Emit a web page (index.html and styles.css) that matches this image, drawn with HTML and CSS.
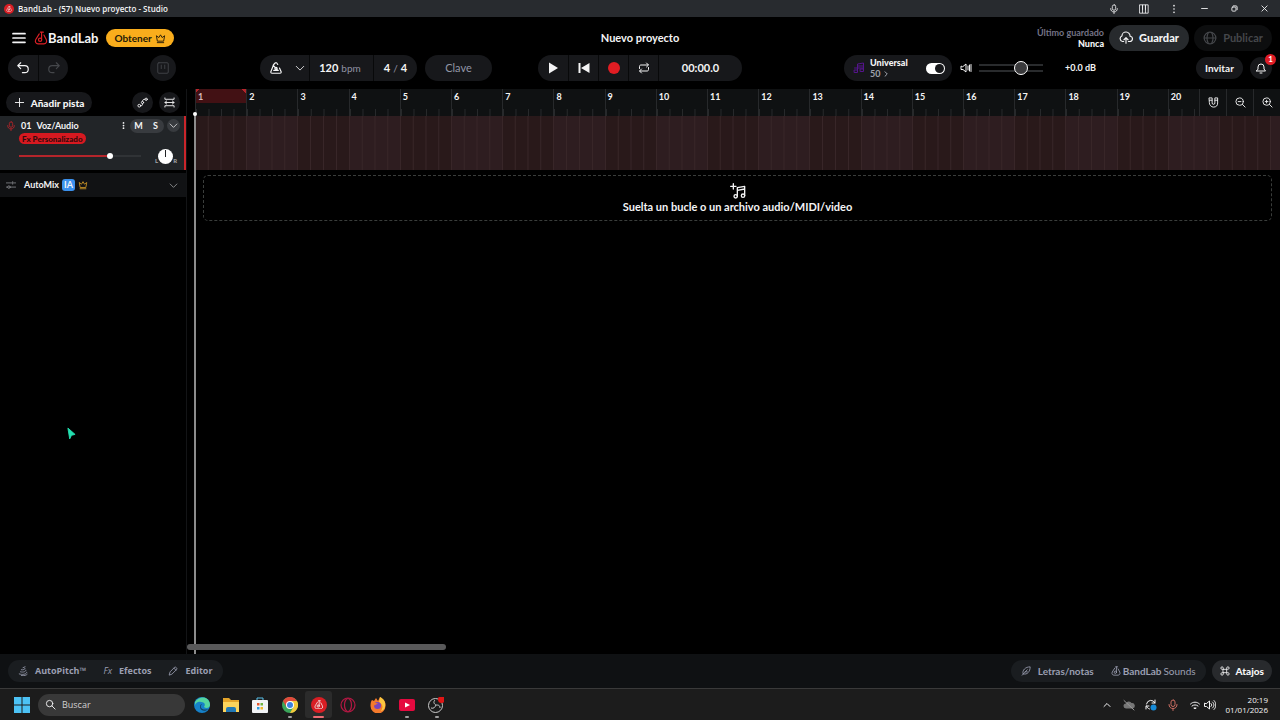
FILE: index.html
```html
<!DOCTYPE html>
<html lang="es">

<head>
  <meta charset="UTF-8">
  <meta name="viewport" content="width=device-width, initial-scale=1.0">
  <title>BandLab - (57) Nuevo proyecto - Studio</title>
  <link rel="stylesheet" href="styles.css">
</head>

<body>
  <svg class="sprite" aria-hidden="true">
    <symbol id="logo" viewBox="0 0 24 24">
      <path d="M11 2h5M13 2v12M9 5L3 14.500c-2 4 .5 7.500 4 7.500h10c3.500 0 6-3.500 4-7.500L17 7" />
      <circle cx="10.500" cy="15" r="2.800" />
    </symbol>
    <symbol id="crown" viewBox="0 0 24 24">
      <path d="M5 17L3 6l5.500 4L12 4l3.500 6L21 6l-2 11zM5 21h14" />
    </symbol>
    <symbol id="chevron" viewBox="0 0 24 24">
      <path d="M3 8l9 9 9-9" />
    </symbol>
    <symbol id="mic" viewBox="0 0 24 24">
      <rect x="8" y="2" width="8" height="13" rx="4" />
      <path d="M4 11c0 5 3 8 8 8s8-3 8-8M12 19v4" />
    </symbol>
  </svg>

  <header class="titlebar">
    <span class="app-icon"><svg class="icon"><use href="#logo" /></svg></span>
    <span class="window-title">BandLab - (57) Nuevo proyecto - Studio</span>
    <div class="window-buttons">
      <button aria-label="Micrófono"><svg class="icon"><use href="#mic" /></svg></button>
      <button aria-label="MIDI"><svg class="icon" viewBox="0 0 24 24"><path d="M2 2h20v20H2zM8.500 3v18M15.500 3v18M8.500 3v10M15.500 3v10" /></svg></button>
      <button aria-label="Más"><svg class="icon dots" viewBox="0 0 24 24"><circle cx="12" cy="4" r="2" /><circle cx="12" cy="12" r="2" /><circle cx="12" cy="20" r="2" /></svg></button>
      <button aria-label="Minimizar"><svg class="icon small" viewBox="0 0 24 24"><path d="M2 12h20" /></svg></button>
      <button aria-label="Restaurar"><svg class="icon small" viewBox="0 0 24 24"><rect x="3" y="7" width="14" height="14" rx="3" /><path d="M8 3h9a4 4 0 0 1 4 4v9" /></svg></button>
      <button aria-label="Cerrar"><svg class="icon small" viewBox="0 0 24 24"><path d="M3 3l18 18M21 3L3 21" /></svg></button>
    </div>
  </header>

  <div class="topbar">
    <div class="brand">
      <button class="menu" aria-label="Menú"><svg class="icon" viewBox="0 0 16 14"><path d="M1 2h14M1 7h14M1 12h14" /></svg></button>
      <a class="logo" href="#"><svg class="icon"><use href="#logo" /></svg>BandLab</a>
      <button class="get">Obtener <svg class="icon"><use href="#crown" /></svg></button>
    </div>
    <h1 class="project">Nuevo proyecto</h1>
    <div class="save">
      <p class="saved">Último guardado<strong>Nunca</strong></p>
      <button class="pill save-button"><svg class="icon" viewBox="0 0 24 24"><path d="M8 18H6a5 5 0 0 1-1-9.500A7 7 0 0 1 19 9a4.500 4.500 0 0 1-1 9h-2M12 21v-9M8.500 15L12 11.500l3.500 3.500" /></svg>Guardar</button>
      <button class="pill publish" disabled><svg class="icon" viewBox="0 0 24 24"><circle cx="12" cy="12" r="10" /><path d="M9 3c-3 6-3 12 0 18M15 3c3 6 3 12 0 18M2 12h20" /></svg>Publicar</button>
    </div>
  </div>

  <div class="toolbar">
    <div class="toolbar-start">
      <div class="group">
        <button aria-label="Deshacer"><svg class="icon" viewBox="0 0 24 24"><path d="M8 3L3 8l5 5M3 8h12a5.500 5.500 0 0 1 0 12h-4" /></svg></button>
        <button aria-label="Rehacer" disabled><svg class="icon" viewBox="0 0 24 24"><path d="M16 3l5 5-5 5M21 8H9a5.500 5.500 0 0 0 0 12h3" /></svg></button>
      </div>
      <button class="round midi" aria-label="Teclado MIDI" disabled><svg class="icon" viewBox="0 0 24 24"><rect x="3" y="3" width="18" height="18" rx="2" /><path d="M9 7v6M15 7v6" /></svg></button>
      <div class="group tempo">
        <button class="metronome" aria-label="Metrónomo"><svg class="icon" viewBox="0 0 24 24"><path d="M15 6l-2-3h-2L8 6 3 19c0 1 1 2 2 2h14c1 0 2-1 2-2l-3-7M8 16h8M15 16L7 7" /><circle cx="12" cy="13" r="2" /></svg><svg class="icon arrow"><use href="#chevron" /></svg></button>
        <button class="bpm">120 <small>bpm</small></button>
        <button class="signature">4 <small>/</small> 4</button>
      </div>
      <button class="pill key">Clave</button>
    </div>

    <div class="group transport">
      <button aria-label="Reproducir"><svg class="icon solid" viewBox="0 0 24 24"><path d="M4 1l18 11L4 23z" /></svg></button>
      <button aria-label="Inicio"><svg class="icon solid" viewBox="0 0 24 24"><path d="M1 2h4v20H1zM23 2v20L6 12z" /></svg></button>
      <button aria-label="Grabar"><span class="record"></span></button>
      <button aria-label="Repetir"><svg class="icon" viewBox="0 0 24 24"><path d="M3 13V9c0-2 1-3 3-3h14M17 2l4 4-4 4M21 11v4c0 2-1 3-3 3H4M7 14l-4 4 4 4" /></svg></button>
      <button class="time">00:00.0</button>
    </div>

    <div class="output">
      <div class="mastering">
        <svg class="icon" viewBox="0 0 24 24"><path d="M9 19V4l12-2v15M3 12h18M9 8h12" /><rect x="3" y="16" width="6" height="5" /><rect x="15" y="14" width="6" height="5" /></svg>
        <p><strong>Universal</strong><span>50 <svg class="icon"><use href="#chevron" /></svg></span></p>
        <input class="switch" type="checkbox" aria-label="Masterización" checked>
      </div>
      <svg class="icon speaker" viewBox="0 0 24 24"><path d="M2 9v6h4l6 5V4L6 9zM16 8v8M19 6v12M22 5v14" /></svg>
      <input class="volume" type="range" min="0" max="100" value="70" aria-label="Volumen general">
      <span class="db">+0.0 dB</span>
      <button class="pill invite">Invitar</button>
      <button class="round bell" aria-label="Notificaciones"><svg class="icon" viewBox="0 0 24 24"><path d="M3 18h18l-3-4V10a6 6 0 0 0-12 0v4zM10 22h4" /></svg><span class="badge">1</span></button>
    </div>
  </div>

  <main class="studio">
    <aside class="tracks">
      <div class="tracks-head">
        <button class="pill add"><svg class="icon" viewBox="0 0 24 24"><path d="M12 3v18M3 12h18" /></svg>Añadir pista</button>
        <button class="round" aria-label="Automatización"><svg class="icon" viewBox="0 0 24 24"><circle cx="5" cy="19" r="3" /><circle cx="12" cy="12" r="2.500" /><circle cx="20" cy="5" r="2.500" /><path d="M8 19c4 0 4-1 4-4M12 9c0-3 2-4 5-4" /></svg></button>
        <button class="round" aria-label="Ajustar pistas"><svg class="icon" viewBox="0 0 24 24"><path d="M2 2v3h20V2M2 22v-3h20v3M2 12h20M6 8.500L2 12l4 3.500M18 8.500l4 3.500-4 3.500" /></svg></button>
      </div>
      <section class="track">
        <div class="track-title">
          <svg class="icon rec"><use href="#mic" /></svg>
          <span class="number">01</span>
          <span class="name">Voz/Audio</span>
          <button class="more" aria-label="Opciones"><svg class="icon dots" viewBox="0 0 24 24"><circle cx="12" cy="3" r="3" /><circle cx="12" cy="12" r="3" /><circle cx="12" cy="21" r="3" /></svg></button>
          <div class="mute-solo"><button>M</button><button>S</button></div>
          <button class="expand" aria-label="Expandir"><svg class="icon"><use href="#chevron" /></svg></button>
        </div>
        <button class="fx">Fx Personalizado</button>
        <div class="mix">
          <input class="level" type="range" min="0" max="100" value="76" aria-label="Volumen de pista">
          <div class="pan"><span>L</span><span class="knob"></span><span>R</span></div>
        </div>
      </section>
      <section class="automix">
        <svg class="icon" viewBox="0 0 24 24"><path d="M1 7h13M18 7h5M16 4v6M1 17h3M10 17h13" /><circle cx="7" cy="17" r="3" /></svg>
        <span class="automix-name">AutoMix</span>
        <span class="ai">IA</span>
        <svg class="icon gold"><use href="#crown" /></svg>
        <button class="expand" aria-label="Expandir"><svg class="icon"><use href="#chevron" /></svg></button>
      </section>
    </aside>

    <section class="timeline">
      <div class="ruler">
        <div class="bars" id="bars"></div>
        <div class="ruler-tools">
          <button aria-label="Imán"><svg class="icon" viewBox="0 0 24 24"><path d="M3 2h6v11a3 3 0 0 0 6 0V2h6v11a9 9 0 0 1-18 0zM3 7h6M15 7h6" /></svg></button>
          <button aria-label="Alejar"><svg class="icon" viewBox="0 0 24 24"><circle cx="10" cy="10" r="8" /><path d="M16 16l6 6M7 10h6" /></svg></button>
          <button aria-label="Acercar"><svg class="icon" viewBox="0 0 24 24"><circle cx="10" cy="10" r="8" /><path d="M16 16l6 6M7 10h6M10 7v6" /></svg></button>
        </div>
      </div>
      <div class="lane" id="lane"></div>
      <div class="drop">
        <svg class="icon" viewBox="0 0 24 24"><path d="M5 1v8M1 5h8M11 20V7l11-2v14M11 11l11-2" /><circle cx="8.500" cy="20" r="2.500" /><circle cx="19.500" cy="19" r="2.500" /></svg>
        <span>Suelta un bucle o un archivo audio/MIDI/video</span>
      </div>
      <div class="playhead"></div>
      <div class="scroll"><span></span></div>
    </section>
  </main>

  <!-- Cursor del ratón -->
  <svg class="cursor" viewBox="0 0 10 14"><path d="M1 1l8 7-4 1-2 4z" /></svg>

  <footer class="panels">
    <div class="panel-group system">
      <button><svg class="icon" viewBox="0 0 24 24"><path d="M12 4l5-2M8 9c5 1 9-1 9-3M6 14c7 2 14-1 13-4M3 19c9 3 19 0 18-4M8 23c7 1 12-1 14-3" /></svg>AutoPitch™</button>
      <button><i>Fx</i>Efectos</button>
      <button><svg class="icon" viewBox="0 0 24 24"><path d="M3 21l2-7L16 3c2-2 7 3 5 5L10 19zM14 5l5 5" /></svg>Editor</button>
    </div>
    <div class="panel-group end">
      <button><svg class="icon" viewBox="0 0 24 24"><path d="M3 22L15 9M5 19C2 10 11 2 22 2c0 11-7 20-16 17M10 14h5" /></svg>Letras/notas</button>
      <button class="sounds"><svg class="icon"><use href="#logo" /></svg>BandLab <span>Sounds</span></button>
    </div>
    <button class="pill shortcuts"><svg class="icon" viewBox="0 0 24 24"><path d="M8 8h8v8H8zM8 8H5a3 3 0 1 1 3-3zM16 8V5a3 3 0 1 1 3 3zM16 16h3a3 3 0 1 1-3 3zM8 16v3a3 3 0 1 1-3-3z" /></svg>Atajos</button>
  </footer>

  <nav class="taskbar">
    <button class="app" aria-label="Inicio"><svg viewBox="0 0 16 16"><path fill="#4cc2f5" d="M0 0h7.500v7.500H0zM8.500 0H16v7.500H8.500zM0 8.500h7.500V16H0zM8.500 8.500H16V16H8.500z" /></svg></button>
    <label class="search"><svg class="icon" viewBox="0 0 24 24"><circle cx="10" cy="10" r="7" /><path d="M15 15l7 7" /></svg><input type="text" placeholder="Buscar" aria-label="Buscar"></label>
    <div class="apps">
      <button class="app" aria-label="Edge"><svg viewBox="0 0 16 16"><circle cx="8" cy="8" r="8" fill="#1681c9" /><path fill="#54d5a0" d="M1 5C5-2 16-1 16 8c0 3-4 4-6 2 2-3 0-5-3-5-3-1-5 1-6 3z" /><path fill="#14405f" d="M8 7c-3 3 0 7 6 5-2 3-8 2-8-2 0-2 1-3 2-3z" /></svg></button>
      <button class="app" aria-label="Explorador"><svg viewBox="0 0 16 16"><path fill="#e5a52a" d="M0 1h6l2 2h8v4H0z" /><path fill="#fcd45c" d="M0 5h16v10H0z" /><path fill="#2379b5" d="M3 15v-3q0-2 2-2h6q2 0 2 2v3z" /></svg></button>
      <button class="app" aria-label="Tienda"><svg viewBox="0 0 16 16"><path fill="none" stroke="#58bfe8" d="M5 4V1h6v3" /><rect y="3" width="16" height="13" rx="1" fill="#f1f3f5" /><path fill="#e4572e" d="M5 6h2.500v2.500H5z" /><path fill="#6fb43f" d="M8.500 6H11v2.500H8.500z" /><path fill="#2d9de0" d="M5 10h2.500v2.500H5z" /><path fill="#f2b82c" d="M8.500 10H11v2.500H8.500z" /></svg></button>
      <button class="app running" aria-label="Chrome"><svg viewBox="0 0 16 16"><circle cx="8" cy="8" r="8" fill="#3ba55a" /><path fill="#e04a3b" d="M1 4a8 8 0 0 1 14 0H8L4.500 10z" /><path fill="#f5c83b" d="M15 4a8 8 0 0 1-7 12l3.500-6L8 4z" /><circle cx="8" cy="8" r="4" fill="#fff" /><circle cx="8" cy="8" r="3" fill="#3d80e0" /></svg></button>
      <button class="app running current" aria-label="BandLab"><span class="app-icon"><svg class="icon"><use href="#logo" /></svg></span></button>
      <button class="app" aria-label="Opera"><svg viewBox="0 0 16 16" fill="none" stroke="#b31843" stroke-width="1.200"><circle cx="8" cy="8" r="7" /><ellipse cx="8" cy="8" rx="3.500" ry="6.500" /></svg></button>
      <button class="app" aria-label="Firefox"><svg viewBox="0 0 16 16"><path fill="#f47a2c" d="M2 3l2 1 2-3 2 3 2-4c3 2 6 4 5.500 9A7.500 7.500 0 0 1 .5 9C.5 6 1 4 2 3z" /><path fill="#fbc740" d="M10 0c4 2 6 5 5 10-1 3-3 4-4 4 3-5 1-7-2-9z" /><circle cx="7.500" cy="8.500" r="3.500" fill="#7746bd" /><path fill="#f47a2c" d="M3 6c2-1 3 1 5 0-1 2-3 1-3 3z" /></svg></button>
      <button class="app running" aria-label="YouTube"><svg viewBox="0 0 16 16"><rect y="2" width="16" height="12" rx="2" fill="#e5093f" /><path fill="#fff" d="M6 5.500l5 2.500-5 2.500z" /></svg></button>
      <button class="app running" aria-label="OBS"><svg viewBox="0 0 16 16" fill="none" stroke="#c9c9c9"><circle cx="7.500" cy="8.500" r="7" /><path d="M7 3c-2 2-1 4 1 5M3 11c3 1 4-1 5-3M12 11c0-3-2-3-4-3" /><circle cx="13.500" cy="2.500" r="3.500" fill="#e01515" stroke="none" /></svg></button>
    </div>
    <div class="tray">
      <svg class="icon" viewBox="0 0 24 24"><path d="M6 15l6-6 6 6" /></svg>
      <svg class="icon cloud" viewBox="0 0 24 24"><path class="fill" d="M6 19a5 5 0 0 1 0-10 6 6 0 0 1 11-1 5.500 5.500 0 0 1 2 11z" /><path d="M2 3l20 19" /></svg>
      <svg class="icon sync" viewBox="0 0 24 24"><path d="M3 10a9 9 0 0 1 17-2M20 2v6h-6M9 20c-3-1-5-3-6-6M2 20v-6h6" /><circle cx="17" cy="17" r="6" /></svg>
      <svg class="icon tray-mic"><use href="#mic" /></svg>
      <svg class="icon wifi" viewBox="0 0 24 24"><path d="M3 10c5-5 13-5 18 0M6 14c4-3 8-3 12 0M10 18h4M11 19h2" /></svg>
      <svg class="icon" viewBox="0 0 24 24"><path d="M1 9v6h4l6 5V4L5 9zM14 9c2 2 2 4 0 6M17 6c4 4 4 8 0 12M20 3c5 5 5 13 0 18" /></svg>
      <p class="clock">20:19<br>01/01/2026</p>
    </div>
  </nav>

  <script>
    const bars = document.getElementById("bars");
    const lane = document.getElementById("lane");

    for (let i = 1; i <= 25; i++) {
      const bar = document.createElement("span");
      bar.className = i === 1 ? "bar loop" : "bar";
      bar.textContent = i <= 20 ? i : "";
      bars.appendChild(bar);
      lane.appendChild(document.createElement("span"));
    }
  </script>
</body>

</html>
```
FILE: styles.css
```css
* {
  margin: 0;
  padding: 0;
  box-sizing: border-box;
}

body {
  display: flex;
  flex-direction: column;
  height: 100vh;
  overflow: hidden;
  background: #000;
  color: #f4f4f5;
  font-family: Lato, "Liberation Sans", sans-serif;
  font-size: 11px;
  font-weight: 700;
  line-height: 12px;
}

button,
input {
  border: 0;
  background: none;
  color: inherit;
  font: inherit;
}

button {
  display: flex;
  align-items: center;
  justify-content: center;
  flex-shrink: 0;
}

.sprite {
  position: absolute;
  width: 0;
  height: 0;
}

.icon {
  width: 14px;
  height: 14px;
  flex-shrink: 0;
  fill: none;
  stroke: currentColor;
  stroke-width: 2;
  stroke-linecap: round;
  stroke-linejoin: round;
}

.solid,
.dots {
  fill: currentColor;
  stroke: none;
}

/* Barra de la ventana */
.titlebar {
  display: flex;
  align-items: center;
  height: 17px;
  flex-shrink: 0;
  padding: 0 1px 0 4px;
  background: #282b2f;
  font-family: "Open Sans", "Noto Sans", sans-serif;
  font-size: 8px;
  font-weight: 600;
}

.app-icon {
  display: flex;
  align-items: center;
  justify-content: center;
  width: 10px;
  height: 10px;
  border-radius: 50%;
  background: #d81e24;
}

.app-icon .icon {
  width: 60%;
  height: 60%;
}

.window-title {
  margin-left: 4px;
}

.window-buttons {
  display: flex;
  margin-left: auto;
}

.window-buttons button {
  width: 30px;
}

.window-buttons .icon {
  width: 10px;
  height: 10px;
}

.window-buttons .small {
  width: 7px;
  height: 7px;
  stroke-width: 3;
}

/* Cabecera */
.topbar,
.toolbar {
  display: grid;
  grid-template-columns: 1fr auto 1fr;
  align-items: center;
  flex-shrink: 0;
}

.topbar {
  height: 37px;
  padding: 5px 8px 0;
}

.brand,
.save {
  display: flex;
  align-items: center;
}

.menu {
  width: 22px;
  height: 20px;
}

.menu .icon {
  height: 12px;
}

.logo {
  display: flex;
  align-items: center;
  margin-left: 4px;
  color: inherit;
  font-size: 13px;
  text-decoration: none;
}

.logo .icon {
  color: #dc2026;
}

.get {
  gap: 3px;
  height: 18px;
  margin-left: 8px;
  padding: 0 8px;
  border-radius: 9px;
  background: #f9ad1c;
  color: #241a08;
  font-size: 10px;
}

.get .icon {
  width: 11px;
  height: 11px;
}

.save {
  justify-content: flex-end;
  gap: 5px;
}

.project {
  font-size: 11px;
}

.saved {
  color: #747386;
  font-size: 9px;
  line-height: 11px;
  text-align: right;
}

.saved strong {
  display: block;
  color: #f4f4f5;
}

.pill {
  gap: 6px;
  height: 26px;
  padding: 0 8px;
  border-radius: 13px;
  background: #17181b;
}

.save-button {
  width: 80px;
  background: #272a2d;
  font-weight: 900;
}

.publish {
  width: 78px;
  background: #0d0e0f;
}

button:disabled {
  color: #45474b;
}

.toolbar {
  height: 32px;
  padding: 0 8px 4px;
}

.toolbar-start,
.output {
  display: flex;
  align-items: center;
}

.group {
  display: flex;
  height: 26px;
  overflow: hidden;
  border-radius: 13px;
  background: #17181b;
}

.group button + button {
  border-left: 1px solid #08090a;
}

.group button {
  width: 30px;
}

.round {
  width: 26px;
  height: 26px;
  border-radius: 50%;
  background: #17181b;
}

.midi {
  margin: 0 84px 0 82px;
}

.midi .icon {
  stroke-width: 1.5;
}

.group .metronome {
  gap: 12px;
  width: 49px;
  padding-left: 4px;
}

.group .arrow {
  width: 10px;
  height: 10px;
}

.group .bpm {
  width: 64px;
}

.group .signature {
  width: 44px;
}

.tempo small {
  margin: 0 3px;
  color: #8f92a3;
  font-size: 10px;
  font-weight: 400;
}

.key {
  width: 67px;
  margin-left: 8px;
  color: #9296a6;
  font-weight: 400;
}

.transport .icon {
  width: 12px;
  height: 12px;
}

.record {
  width: 12px;
  height: 12px;
  border-radius: 50%;
  background: #e11d23;
}

.transport .time {
  width: 84px;
}

.output {
  justify-content: flex-end;
}

.mastering {
  display: flex;
  align-items: center;
  width: 108px;
  height: 26px;
  padding: 0 7px 0 9px;
  border-radius: 13px;
  background: #17181b;
}

.mastering > .icon {
  width: 12px;
  height: 12px;
  color: #55148c;
}

.mastering p {
  margin-left: 5px;
  font-size: 9px;
  line-height: 11px;
}

.mastering p span {
  display: block;
  color: #a0a3ad;
}

.mastering p .icon {
  width: 6px;
  height: 6px;
  stroke-width: 4;
  transform: rotate(-90deg);
}

.switch {
  display: flex;
  align-items: center;
  justify-content: flex-end;
  width: 19px;
  height: 11px;
  margin-left: auto;
  border-radius: 6px;
  background: #fff;
  appearance: none;
}

.switch::before {
  content: "";
  width: 9px;
  height: 9px;
  margin-right: 1px;
  border-radius: 50%;
  background: #17181b;
}

.speaker {
  width: 12px;
  height: 12px;
  margin-left: 8px;
}

.volume {
  width: 64px;
  height: 14px;
  margin-left: 7px;
  appearance: none;
}

.volume::-webkit-slider-runnable-track {
  height: 8px;
  border: solid #292b2d;
  border-width: 2px 0;
}

.volume::-webkit-slider-thumb {
  width: 14px;
  height: 14px;
  margin-top: -5px;
  border: 1px solid #fff;
  border-radius: 50%;
  background: #3a3a3c;
  appearance: none;
}

.db {
  width: 30px;
  margin-left: 22px;
  font-size: 9px;
  white-space: nowrap;
}

.invite {
  width: 47px;
  height: 22px;
  margin-left: 101px;
  font-size: 10px;
}

.bell {
  position: relative;
  width: 22px;
  height: 22px;
  margin-left: 7px;
}

.bell .icon {
  width: 12px;
  height: 12px;
}

.badge {
  position: absolute;
  top: -3px;
  right: -4px;
  width: 11px;
  height: 11px;
  border-radius: 50%;
  background: #df1c25;
  color: #fff;
  font-size: 8px;
  line-height: 11px;
}

/* Pistas */
.studio {
  display: flex;
  flex: 1;
  min-height: 0;
  margin-top: 3px;
}

.tracks {
  width: 187px;
  flex-shrink: 0;
  border-right: 1px solid #131416;
}

.tracks-head {
  display: flex;
  align-items: center;
  gap: 6px;
  height: 27px;
  padding: 0 6px;
}

.tracks-head button {
  height: 21px;
}

.tracks-head .round {
  width: 21px;
}

.tracks-head .icon {
  width: 11px;
  height: 11px;
}

.add {
  width: 86px;
  margin-right: auto;
  padding: 0;
  font-size: 10px;
  font-weight: 900;
}

.track {
  height: 54px;
  padding: 2px 4px 0 6px;
  border-right: 2px solid #c9252a;
  background: #222528;
  font-size: 9px;
}

.track-title {
  display: flex;
  align-items: center;
  height: 15px;
}

.track .rec {
  width: 10px;
  height: 10px;
  color: #bd2429;
}

.number {
  margin: 0 5px;
}

.more {
  width: 14px;
  margin-left: auto;
}

.more .icon {
  width: 7px;
  height: 7px;
}

.mute-solo {
  display: flex;
  width: 34px;
  height: 14px;
  border-radius: 7px;
  background: #383b3f;
}

.mute-solo button {
  flex: 1;
}

.expand {
  width: 13px;
  height: 13px;
  margin-left: 3px;
  border-radius: 50%;
  background: #383b3f;
}

.expand .icon {
  width: 9px;
  height: 9px;
}

.fx {
  height: 11px;
  margin-left: 13px;
  padding: 0 3px;
  border-radius: 6px;
  background: #d71920;
  color: #35090b;
  font-size: 8px;
  font-weight: 900;
}

.mix {
  display: flex;
  align-items: center;
  justify-content: space-between;
  height: 24px;
  padding: 0 3px 0 13px;
}

.level {
  width: 122px;
  height: 8px;
  background: linear-gradient(to right, #b5252b 75%, #303336 75%) center / 100% 2px no-repeat;
  appearance: none;
}

.level::-webkit-slider-thumb {
  width: 6px;
  height: 6px;
  border-radius: 50%;
  background: #fff;
  appearance: none;
}

.pan {
  display: flex;
  align-items: flex-end;
  color: #a5a7ab;
  font-size: 6px;
  line-height: 6px;
}

.knob {
  width: 15px;
  height: 15px;
  border-radius: 50%;
  background: linear-gradient(#202225, #202225) 50% 1px / 1px 7px no-repeat #fff;
}

.automix {
  display: flex;
  align-items: center;
  gap: 3px;
  height: 24px;
  margin-top: 3px;
  padding: 0 6px;
  background: #111214;
  font-size: 9px;
}

.automix > .icon {
  width: 10px;
  height: 10px;
  color: #85878b;
}

.automix-name {
  margin-left: 5px;
}

.ai {
  padding: 0 2px;
  border-radius: 3px;
  background: #3b91ee;
}

.automix .gold {
  color: #d39a26;
}

.automix .expand {
  margin-left: auto;
  background: none;
  color: #a8a9ac;
}

/* Línea de tiempo */
.timeline {
  position: relative;
  flex: 1;
  min-width: 0;
  padding-left: 8px;
  overflow: hidden;
}

.ruler {
  display: flex;
  height: 27px;
  background: #0f1112;
}

.bars {
  display: grid;
  grid-template-columns: repeat(25, 1fr);
  flex: 0 0 1280px;
}

.bar {
  padding: 2px;
  border-left: 1px solid #27292b;
  background: linear-gradient(to right, #27292b 1px, transparent 1px) 0 100% / 25% 7px repeat-x;
  font-size: 9px;
  line-height: 11px;
}

/* Tramo del bucle, con las dos esquinas marcadas */
.loop {
  background:
    linear-gradient(to bottom right, #b5252b 50%, transparent 50%) 0 0 / 4px 4px no-repeat,
    linear-gradient(to bottom left, #b5252b 50%, transparent 50%) 100% 0 / 4px 4px no-repeat,
    linear-gradient(#421114, #421114) 0 0 / 100% 14px no-repeat,
    linear-gradient(to right, #27292b 1px, transparent 1px) 0 100% / 25% 7px repeat-x;
  color: #d9b9bb;
}

/* Los botones quedan encima de la regla */
.ruler-tools {
  position: absolute;
  top: 0;
  right: 0;
  display: flex;
  height: 27px;
  background: #0f1112;
}

.ruler-tools button {
  width: 27px;
  border-left: 1px solid #27292b;
}

.ruler-tools .icon {
  width: 11px;
  height: 11px;
}

.lane {
  display: grid;
  grid-template-columns: repeat(25, 1fr);
  width: 1280px;
  height: 54px;
}

.lane span {
  background: linear-gradient(to right, #382628 1px, transparent 1px) 0 0 / 25% 100% #29191a;
}

.lane span:nth-child(even) {
  background-color: #2e1d20;
}

.drop {
  display: flex;
  flex-direction: column;
  align-items: center;
  gap: 1px;
  height: 46px;
  margin: 5px 8px 0;
  padding-top: 7px;
  border: 1px dashed #3a3d3b;
  border-radius: 5px;
}

.drop .icon {
  width: 16px;
  height: 16px;
}

.drop span {
  line-height: 14px;
}

.playhead {
  position: absolute;
  top: 25px;
  bottom: 0;
  left: 7px;
  width: 2px;
  background: #8c8c8c;
}

.playhead::before {
  content: "";
  position: absolute;
  top: -2px;
  left: -1px;
  width: 4px;
  height: 4px;
  border-radius: 50%;
  background: #fff;
}

.scroll {
  position: absolute;
  right: 0;
  bottom: 4px;
  left: 0;
}

.scroll span {
  display: block;
  width: 259px;
  height: 6px;
  border-radius: 3px;
  background: #59595a;
}

.cursor {
  position: absolute;
  top: 427px;
  left: 67px;
  width: 9px;
  height: 13px;
  fill: #24dfb0;
  stroke: #24dfb0;
}

/* Paneles inferiores */
.panels {
  display: flex;
  align-items: center;
  gap: 6px;
  height: 34px;
  flex-shrink: 0;
  padding: 0 8px;
  background: #0f1113;
  font-size: 10px;
}

.panel-group {
  display: flex;
  gap: 17px;
  height: 22px;
  padding: 0 10px;
  border-radius: 11px;
  background: #1a1d20;
  color: #9b9fb2;
}

.panel-group button {
  gap: 7px;
}

.panels .icon {
  width: 10px;
  height: 10px;
}

.panels i {
  font-weight: 400;
}

.system {
  font-family: "Open Sans", "Noto Sans", sans-serif;
  font-size: 9px;
}

.end {
  margin-left: auto;
}

.panel-group .sounds {
  gap: 2px;
}

.sounds span {
  font-weight: 400;
}

.shortcuts {
  height: 22px;
  padding: 0 8px;
  background: #282a2d;
  font-weight: 900;
}

/* Barra de tareas */
.taskbar {
  display: flex;
  align-items: center;
  height: 32px;
  flex-shrink: 0;
  padding: 0 12px 0 8px;
  border-top: 1px solid #3a3a3a;
  background: #1c1c1c;
  font-family: "Open Sans", "Noto Sans", sans-serif;
  font-weight: 400;
}

.apps {
  display: grid;
  grid-template-columns: repeat(9, 1fr);
  justify-items: center;
  width: 264px;
}

.app {
  position: relative;
  width: 27px;
  height: 27px;
  border-radius: 3px;
}

.app > svg,
.app .app-icon {
  width: 16px;
  height: 16px;
}

.current {
  background: #2b2b2b;
}

.running::after {
  content: "";
  position: absolute;
  bottom: 0;
  left: 12px;
  width: 4px;
  height: 2px;
  border-radius: 1px;
  background: #a0a0a0;
}

.current::after {
  left: 8px;
  width: 11px;
  background: #ed6b73;
}

.search {
  display: flex;
  align-items: center;
  gap: 6px;
  width: 147px;
  height: 22px;
  margin: 0 2px 0 3px;
  padding: 0 7px;
  border-radius: 11px;
  background: #383838;
}

.search .icon {
  width: 11px;
  height: 11px;
}

.search input {
  width: 100%;
  font-size: 9px;
}

.search input::placeholder {
  color: #d0d0d0;
}

.tray {
  display: flex;
  align-items: center;
  gap: 10px;
  margin-left: auto;
}

.tray .icon {
  width: 12px;
  height: 12px;
}

.cloud {
  color: #999;
}

.cloud .fill {
  fill: #777;
  stroke: none;
}

.sync circle {
  fill: #168bd8;
  stroke: none;
}

.tray .tray-mic {
  color: #c86c61;
}

.wifi + .icon {
  margin-left: -7px;
}

.clock {
  font-size: 8px;
  line-height: 10px;
  text-align: right;
}
```
